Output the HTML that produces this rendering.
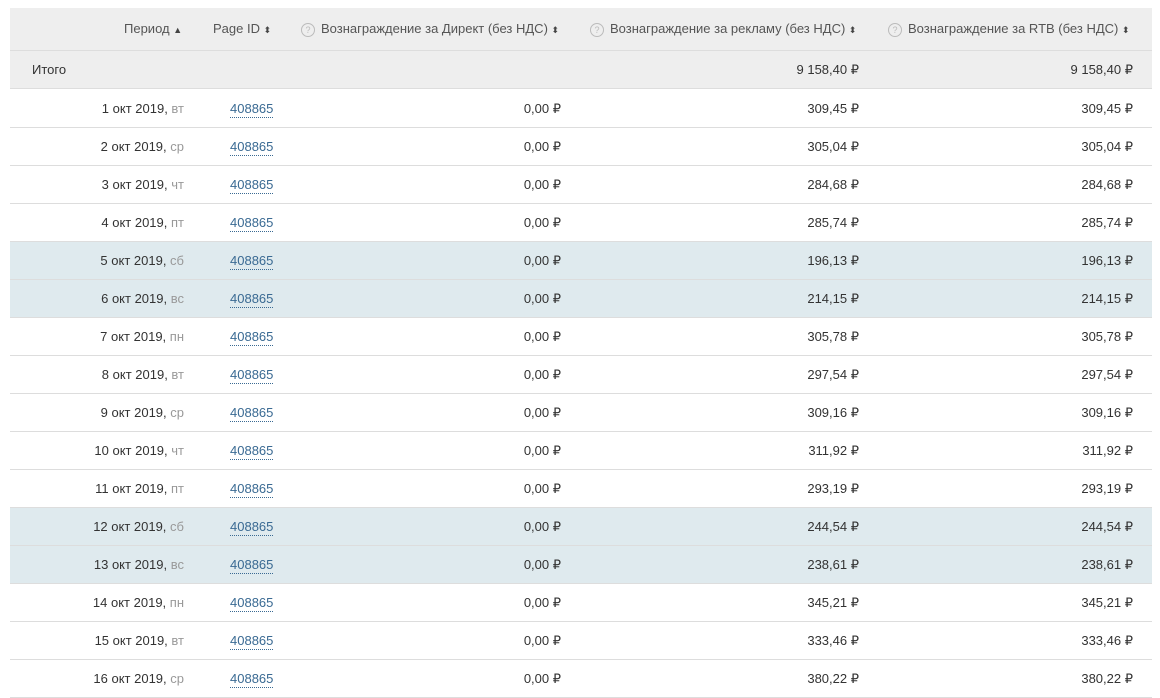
<!DOCTYPE html>
<html><head><meta charset="utf-8"><style>
body{margin:0;background:#fff;font-family:"Liberation Sans",Arial,sans-serif;font-size:13px;color:#333;width:1160px;height:687px;overflow:hidden;position:relative}
.row{position:absolute;left:10px;width:1142px;height:37px;border-bottom:1px solid #ddd}
.row span{position:absolute;top:0;line-height:37px;white-space:nowrap}
.hd{top:8px;height:42px;background:#eee;border-bottom:1px solid #ddd;color:#555}
.hd span{line-height:42px}
.tot{top:51px;background:#eee}
.we{background:#dfeaee}
.d{right:968px}
.d i{font-style:normal;color:#999}
.p{left:220px;color:#3a6a93;}
.p u{text-decoration:none;border-bottom:1px dotted #3a6a93;padding-bottom:1px}
.c1{right:591px}.c2{right:293px}.c3{right:19px}
.q{display:inline-block;width:12px;height:12px;border:1px solid #bbb;border-radius:50%;font-size:9px;line-height:12px;text-align:center;color:#bbb;vertical-align:0px;margin-right:6px;font-weight:normal}
.s{font-size:9px;color:#444}
</style></head><body>
<div class="row hd">
<span style="left:114px">Период <span class="s" style="position:static;line-height:1">▲</span></span>
<span style="left:203px">Page ID <span class="s" style="position:static;line-height:1">⬍</span></span>
<span style="left:291px"><b class="q">?</b>Вознаграждение за Директ (без НДС) <span class="s" style="position:static;line-height:1">⬍</span></span>
<span style="left:580px"><b class="q">?</b>Вознаграждение за рекламу (без НДС) <span class="s" style="position:static;line-height:1">⬍</span></span>
<span style="left:878px"><b class="q">?</b>Вознаграждение за RTB (без НДС) <span class="s" style="position:static;line-height:1">⬍</span></span>
</div>
<div class="row tot"><span style="left:22px">Итого</span><span class="c2">9 158,40 ₽</span><span class="c3">9 158,40 ₽</span></div>
<div id="rows"></div>
<script>
var d=[["вт","309,45"],["ср","305,04"],["чт","284,68"],["пт","285,74"],["сб","196,13"],["вс","214,15"],["пн","305,78"],["вт","297,54"],["ср","309,16"],["чт","311,92"],["пт","293,19"],["сб","244,54"],["вс","238,61"],["пн","345,21"],["вт","333,46"],["ср","380,22"]];
var h="";
d.forEach(function(x,i){var w=(x[0]=="сб"||x[0]=="вс")?" we":"";
h+='<div class="row'+w+'" style="top:'+(90+38*i)+'px"><span class="d">'+(i+1)+' окт 2019, <i>'+x[0]+'</i></span><span class="p"><u>408865</u></span><span class="c1">0,00 ₽</span><span class="c2">'+x[1]+' ₽</span><span class="c3">'+x[1]+' ₽</span></div>';});
document.getElementById("rows").innerHTML=h;
</script>
</body></html>
